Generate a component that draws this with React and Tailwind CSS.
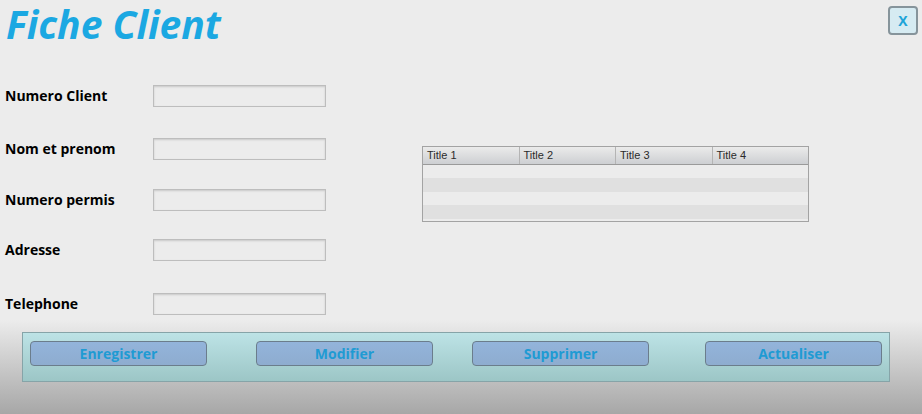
import React from 'react';

const fields = [
  { label: 'Numero Client', mt: 'mt-[25px]' },
  { label: 'Nom et prenom', mt: 'mt-[31px]' },
  { label: 'Numero permis', mt: 'mt-[29px]' },
  { label: 'Adresse', mt: 'mt-[28px]' },
  { label: 'Telephone', mt: 'mt-[32px]' },
];

const columns = ['Title 1', 'Title 2', 'Title 3', 'Title 4'];

const actions = [
  { label: 'Enregistrer', ml: 'ml-[7px]' },
  { label: 'Modifier', ml: 'ml-[49px]' },
  { label: 'Supprimer', ml: 'ml-[39px]' },
  { label: 'Actualiser', ml: 'ml-[56px]' },
];

const FormRow = ({ label, mt }) => (
  <div className={`flex items-center h-[22px] ${mt}`}>
    <span className="w-[153px] shrink-0 pl-[5px] text-[14px] font-bold text-black leading-none">
      {label}
    </span>
    <input
      type="text"
      className="w-[173px] h-[22px] bg-[#ececec] border border-[#bdbdbd] shadow-[inset_0_1px_2px_rgba(0,0,0,0.15)] outline-none"
    />
  </div>
);

const DataTable = () => (
  <div className="w-[387px] h-[76px] border border-[#a3a3a3] bg-[#ececec] flex flex-col">
    {/* header */}
    <div className="flex h-[18px] border-b border-[#9a9a9a] bg-gradient-to-b from-[#ebebeb] to-[#cdcfd2]">
      {columns.map((c, i) => (
        <div
          key={c}
          className={`flex-1 flex items-center pl-[4px] text-[11px] text-[#2b2b2b] font-['Liberation_Sans',Arial,sans-serif] ${
            i < 3 ? 'border-r border-[#b4b4b4]' : ''
          }`}
        >
          {c}
        </div>
      ))}
    </div>
    {/* empty rows */}
    <div className="h-[13px] bg-[#ececec]" />
    <div className="h-[14px] bg-[#e0e0e0]" />
    <div className="h-[13px] bg-[#ececec]" />
    <div className="h-[14px] bg-[#e0e0e0]" />
  </div>
);

export default function App() {
  return (
    <div className="w-[922px] h-[414px] flex flex-col bg-[#ececec] overflow-hidden font-['Open_Sans','Noto_Sans',sans-serif]">
      <div className="h-[320px] flex flex-col">
        {/* header */}
        <div className="flex items-start justify-between h-[60px]">
          <h1 className="pl-[6px] pr-[10px] pt-[1px] text-[39px] leading-[46px] font-bold italic text-[#1ba8e2]">
            Fiche Client
          </h1>
          <button className="mt-[6px] mr-[4px] w-[30px] h-[29px] rounded-[4px] border-2 border-[#86949b] bg-[#d6ebf2] text-[#1ea4d8] text-[14px] font-bold flex items-center justify-center">
            X
          </button>
        </div>

        {/* body */}
        <div className="flex">
          <div className="flex flex-col w-[326px]">
            {fields.map((f) => (
              <FormRow key={f.label} {...f} />
            ))}
          </div>
          <div className="ml-[96px] mt-[86px]">
            <DataTable />
          </div>
        </div>
      </div>

      {/* bottom bar */}
      <div className="flex-1 bg-gradient-to-b from-[#ececec] to-[#a7a7a7] pt-[12px] pl-[22px]">
        <div className="w-[868px] h-[50px] border border-[#86a4a8] bg-gradient-to-b from-[#bde3e6] to-[#9cc6c6] flex items-start pt-[8px]">
          {actions.map((a) => (
            <button
              key={a.label}
              className={`${a.ml} w-[177px] h-[25px] rounded-[4px] border border-[#6b7d8c] bg-gradient-to-b from-[#93b4db] to-[#8eaccf] text-[14px] font-bold text-[#1f9bd3] flex items-center justify-center leading-none`}
            >
              {a.label}
            </button>
          ))}
        </div>
      </div>
    </div>
  );
}
